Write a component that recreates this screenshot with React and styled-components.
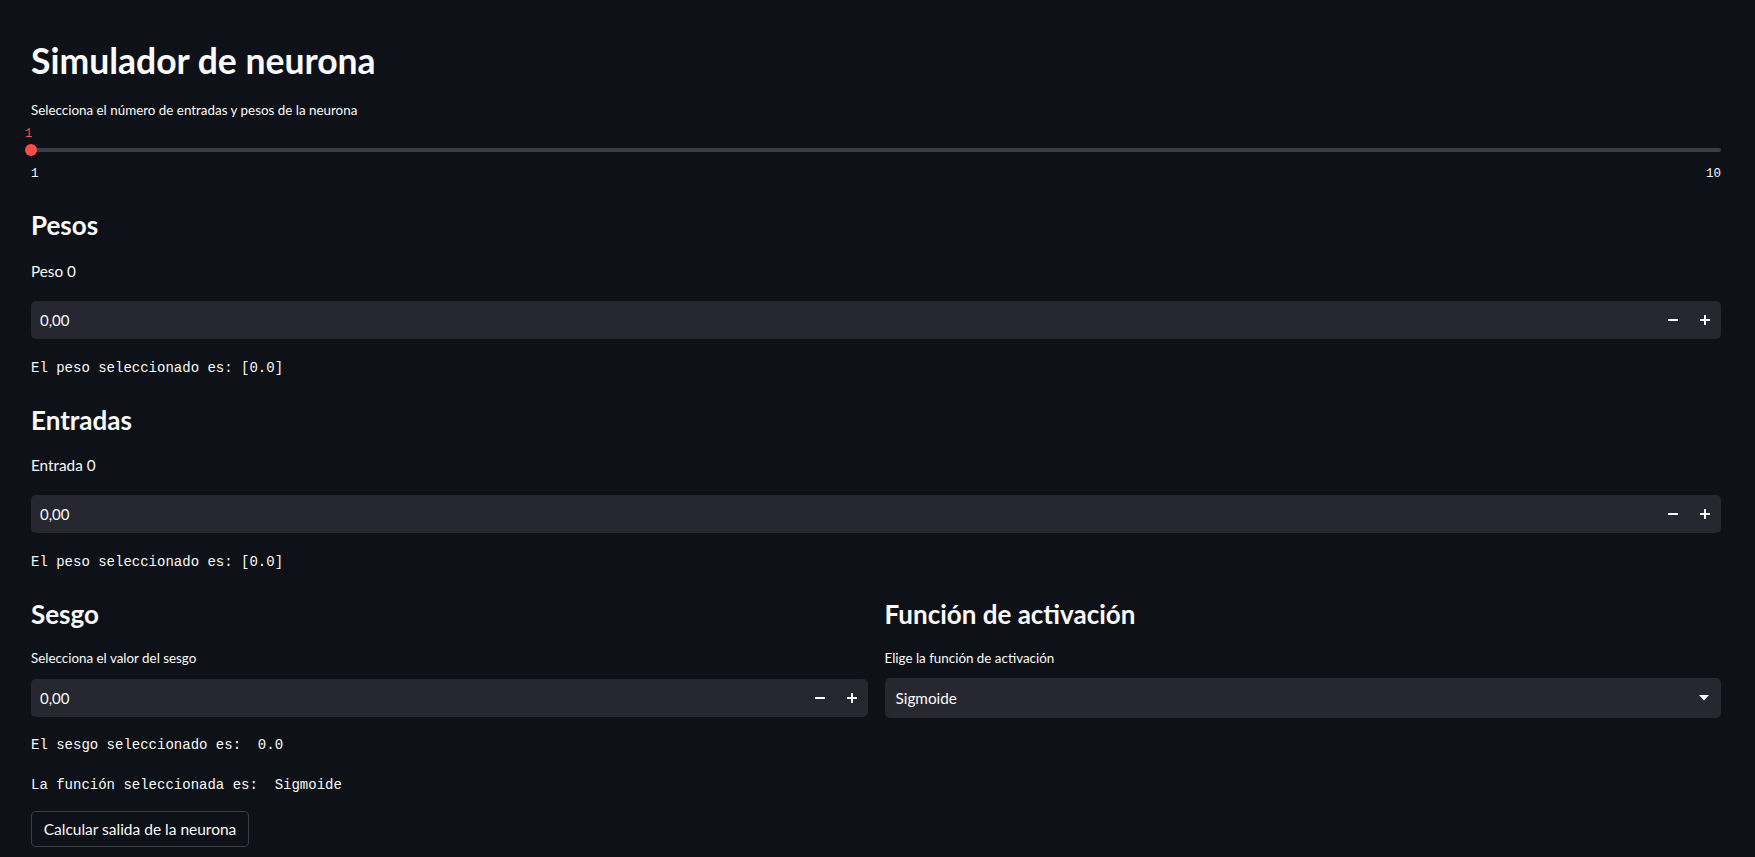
import styled, { createGlobalStyle } from 'styled-components'

const GlobalStyle = createGlobalStyle`
  html, body {
    margin: 0;
    padding: 0;
    background: #0e1117;
  }
  * { box-sizing: border-box; }
`

const Page = styled.div`
  min-height: 100vh;
  background: #0e1117;
  color: #fafafa;
  font-family: Lato, "Noto Sans", sans-serif;
  padding: 37px 34px 0 31px;
`
const Title = styled.h1`
  margin: 0;
  font-size: 35.5px;
  line-height: 48px;
  font-weight: 700;
`
const Heading = styled.h2`
  margin: ${p => p.$mt || 0}px 0 0;
  font-size: 26px;
  line-height: 32px;
  font-weight: 700;
`
const Label = styled.div`
  margin-top: ${p => p.$mt || 0}px;
  font-size: ${p => (p.$big ? 15.3 : 13.4)}px;
  line-height: 20px;
`
const Code = styled.div`
  margin-top: ${p => p.$mt || 0}px;
  font-family: "Liberation Mono", "DejaVu Sans Mono", monospace;
  font-size: 14px;
  line-height: 20px;
  white-space: pre;
`
const Slider = styled.div`
  display: flex;
  flex-direction: column;
`
const SliderValue = styled.div`
  height: 22px;
  padding-top: 6px;
  font-family: "Liberation Mono", monospace;
  font-size: 12px;
  line-height: 16px;
  color: #ff4b4b;
  margin-left: -6px;
`
const TrackRow = styled.div`
  position: relative;
  height: 16px;
  display: flex;
  align-items: center;
`
const Track = styled.div`
  flex: 1;
  height: 4px;
  border-radius: 2px;
  background: #3c3e46;
`
const Thumb = styled.div`
  position: absolute;
  left: -6px;
  top: 2px;
  width: 12px;
  height: 12px;
  border-radius: 50%;
  background: #ff4b4b;
`
const Ticks = styled.div`
  margin-top: 8px;
  display: flex;
  justify-content: space-between;
  font-family: "Liberation Mono", monospace;
  font-size: 12.5px;
  line-height: 16px;
`
const NumberBox = styled.div`
  margin-top: ${p => p.$mt || 0}px;
  height: 38px;
  display: flex;
  align-items: center;
  background: #262730;
  border-radius: 5px;
  padding-left: 9px;
`
const Value = styled.span`
  flex: 1;
  font-size: 15px;
`
const Step = styled.button`
  width: 32px;
  height: 38px;
  border: none;
  background: transparent;
  color: #fafafa;
  display: flex;
  align-items: center;
  justify-content: center;
  padding: 0;
`
const Columns = styled.div`
  margin-top: 26px;
  display: grid;
  grid-template-columns: 1fr 1fr;
  column-gap: 17px;
  align-items: start;
`
const Column = styled.div`
  display: flex;
  flex-direction: column;
`
const SelectBox = styled.div`
  margin-top: 10px;
  height: 40px;
  display: flex;
  align-items: center;
  justify-content: space-between;
  background: #262730;
  border-radius: 5px;
  padding: 0 12px 0 11px;
  font-size: 15.3px;
`
const Button = styled.button`
  margin-top: 16px;
  height: 36px;
  width: 218px;
  background: #0e1117;
  color: #fafafa;
  border: 1px solid rgba(250, 250, 250, 0.2);
  border-radius: 5px;
  font-family: Lato, "Noto Sans", sans-serif;
  font-size: 15.5px;
  padding: 0;
`

const Minus = () => (
  <svg width="10" height="10" viewBox="0 0 10 10">
    <rect x="0" y="4" width="10" height="2" fill="#fafafa" />
  </svg>
)
const Plus = () => (
  <svg width="10" height="10" viewBox="0 0 10 10">
    <rect x="0" y="4" width="10" height="2" fill="#fafafa" />
    <rect x="4" y="0" width="2" height="10" fill="#fafafa" />
  </svg>
)
const Caret = () => (
  <svg width="10" height="6" viewBox="0 0 10 6">
    <path d="M0 0h10L5 5.5z" fill="#fafafa" />
  </svg>
)

const NumberInput = ({ mt }) => (
  <NumberBox $mt={mt}>
    <Value>0,00</Value>
    <Step><Minus /></Step>
    <Step><Plus /></Step>
  </NumberBox>
)

const App = () => {
  return (
    <Page>
      <GlobalStyle />
      <Title>Simulador de neurona</Title>
      <Label $mt={15}>Selecciona el número de entradas y pesos de la neurona</Label>
      <Slider>
        <SliderValue>1</SliderValue>
        <TrackRow>
          <Track />
          <Thumb />
        </TrackRow>
        <Ticks>
          <span>1</span>
          <span>10</span>
        </Ticks>
      </Slider>

      <Heading $mt={27}>Pesos</Heading>
      <Label $big $mt={20}>Peso 0</Label>
      <NumberInput mt={20} />
      <Code $mt={19}>El peso seleccionado es: [0.0]</Code>

      <Heading $mt={26}>Entradas</Heading>
      <Label $big $mt={19}>Entrada 0</Label>
      <NumberInput mt={20} />
      <Code $mt={19}>El peso seleccionado es: [0.0]</Code>

      <Columns>
        <Column>
          <Heading>Sesgo</Heading>
          <Label $mt={18}>Selecciona el valor del sesgo</Label>
          <NumberInput mt={11} />
          <Code $mt={18}>El sesgo seleccionado es:  0.0</Code>
        </Column>
        <Column>
          <Heading>Función de activación</Heading>
          <Label $mt={18}>Elige la función de activación</Label>
          <SelectBox>
            <span>Sigmoide</span>
            <Caret />
          </SelectBox>
        </Column>
      </Columns>
      <Code $mt={20}>La función seleccionada es:  Sigmoide</Code>
      <Button>Calcular salida de la neurona</Button>
    </Page>
  )
}

export default App
